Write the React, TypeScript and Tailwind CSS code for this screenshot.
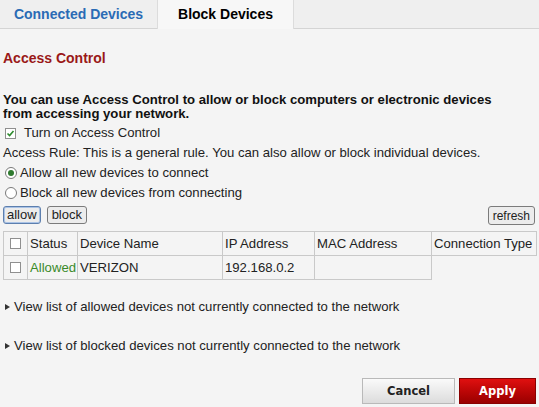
import React from "react";

function Check({ checked }: { checked?: boolean }) {
  return (
    <span className="inline-flex h-[11px] w-[11px] items-center justify-center border border-[#8f8f8f] bg-white">
      {checked && (
        <svg width="9" height="9" viewBox="0 0 9 9">
          <path d="M1.5 4.5 L3.6 6.6 L7.5 2" stroke="#2c8a2c" strokeWidth="1.6" fill="none" />
        </svg>
      )}
    </span>
  );
}

function Radio({ checked }: { checked?: boolean }) {
  return (
    <span className="inline-flex h-[12px] w-[12px] items-center justify-center rounded-full border border-[#7a7a7a] bg-white">
      {checked && <span className="h-[6px] w-[6px] rounded-full bg-[#2f7a2f]" />}
    </span>
  );
}

function Tri() {
  return (
    <svg width="5" height="6" viewBox="0 0 5 6" className="mr-[4px]">
      <path d="M0 0 L5 3 L0 6 Z" fill="#333" />
    </svg>
  );
}

export default function App() {
  const cell = "border border-[#c9c9c9] px-[2px] text-left font-normal whitespace-nowrap overflow-hidden";
  return (
    <div className="h-[407px] w-[539px] overflow-hidden bg-[#f4f4f4] text-[13.15px] leading-[20px] text-[#222] [font-family:'Liberation_Sans',Arial,sans-serif]">
      <div className="flex h-[29px] bg-[#efefef]">
        <div className="flex w-[157px] items-center justify-center border-b border-[#d4d4d4] pb-[1px] text-[14px] font-bold text-[#2a6bb5]">
          Connected Devices
        </div>
        <div className="flex w-[137px] items-center justify-center border-x border-[#dcdcdc] bg-[#f7f7f7] pb-[1px] text-[14px] font-bold text-black">
          Block Devices
        </div>
        <div className="flex-1 border-b border-[#d4d4d4]" />
      </div>

      <div className="px-[3px]">
        <div className="mt-[19px] text-[14px] font-bold text-[#9a1818]">Access Control</div>

        <div className="mt-[25px] w-[505px] font-bold leading-[14px] text-[#111]">
          You can use Access Control to allow or block computers or electronic devices from accessing your network.
        </div>

        <div className="mt-[2px] flex items-center pl-[2px]">
          <Check checked />
          <span className="ml-[8px]">Turn on Access Control</span>
        </div>
        <div>
          Access Rule: This is a general rule. You can also allow or block individual devices.
        </div>
        <div className="flex items-center pl-[2px]">
          <Radio checked />
          <span className="ml-[3px]">Allow all new devices to connect</span>
        </div>
        <div className="flex items-center pl-[2px]">
          <Radio />
          <span className="ml-[3px]">Block all new devices from connecting</span>
        </div>

        <div className="mt-[3px] flex items-start">
          <button className="h-[18px] rounded-[3px] border border-[#5d7fae] bg-[#ececec] px-[3px] text-[13px] leading-[14px] shadow-[inset_0_0_0_1px_#aac3e6]">
            allow
          </button>
          <button className="ml-[6px] h-[18px] rounded-[3px] border border-[#7b7b7b] bg-[#ececec] px-[4px] text-[13px] leading-[14px]">
            block
          </button>
          <div className="flex-1" />
          <button className="mr-[1px] h-[19px] rounded-[3px] border border-[#7b7b7b] bg-[#ececec] px-[4px] text-[12px] leading-[14px]">
            refresh
          </button>
        </div>

        <table className="mt-[6px] w-[534px] table-fixed border-collapse">
          <colgroup>
            <col className="w-[24px]" />
            <col className="w-[50px]" />
            <col className="w-[145px]" />
            <col className="w-[92px]" />
            <col className="w-[117px]" />
            <col />
          </colgroup>
          <thead>
            <tr className="h-[24px]">
              <th className={cell}>
                <div className="flex justify-center"><Check /></div>
              </th>
              <th className={cell}>Status</th>
              <th className={cell}>Device Name</th>
              <th className={cell}>IP Address</th>
              <th className={cell}>MAC Address</th>
              <th className={cell}>Connection Type</th>
            </tr>
          </thead>
          <tbody>
            <tr className="h-[24px]">
              <td className={cell}>
                <div className="flex justify-center"><Check /></div>
              </td>
              <td className={cell + " text-[#3a8a2a]"}>Allowed</td>
              <td className={cell}>VERIZON</td>
              <td className={cell}>192.168.0.2</td>
              <td className={cell}></td>
            </tr>
          </tbody>
        </table>

        <div className="mt-[17px] flex items-center pl-[2px]">
          <Tri />
          <span>View list of allowed devices not currently connected to the network</span>
        </div>
        <div className="mt-[19px] flex items-center pl-[2px]">
          <Tri />
          <span>View list of blocked devices not currently connected to the network</span>
        </div>

        <div className="mt-[22px] flex justify-end">
          <button className="h-[26px] w-[93px] border border-[#b9b9b9] bg-gradient-to-b from-[#fafafa] to-[#dcdcdc] text-[11.5px] font-bold text-[#222] [font-family:'DejaVu_Sans',Verdana,sans-serif]">
            Cancel
          </button>
          <button className="ml-[4px] h-[26px] w-[77px] border border-[#8a0000] bg-gradient-to-b from-[#e01010] to-[#9a0000] text-[11.5px] font-bold text-white [font-family:'DejaVu_Sans',Verdana,sans-serif]">
            Apply
          </button>
        </div>
      </div>
    </div>
  );
}
